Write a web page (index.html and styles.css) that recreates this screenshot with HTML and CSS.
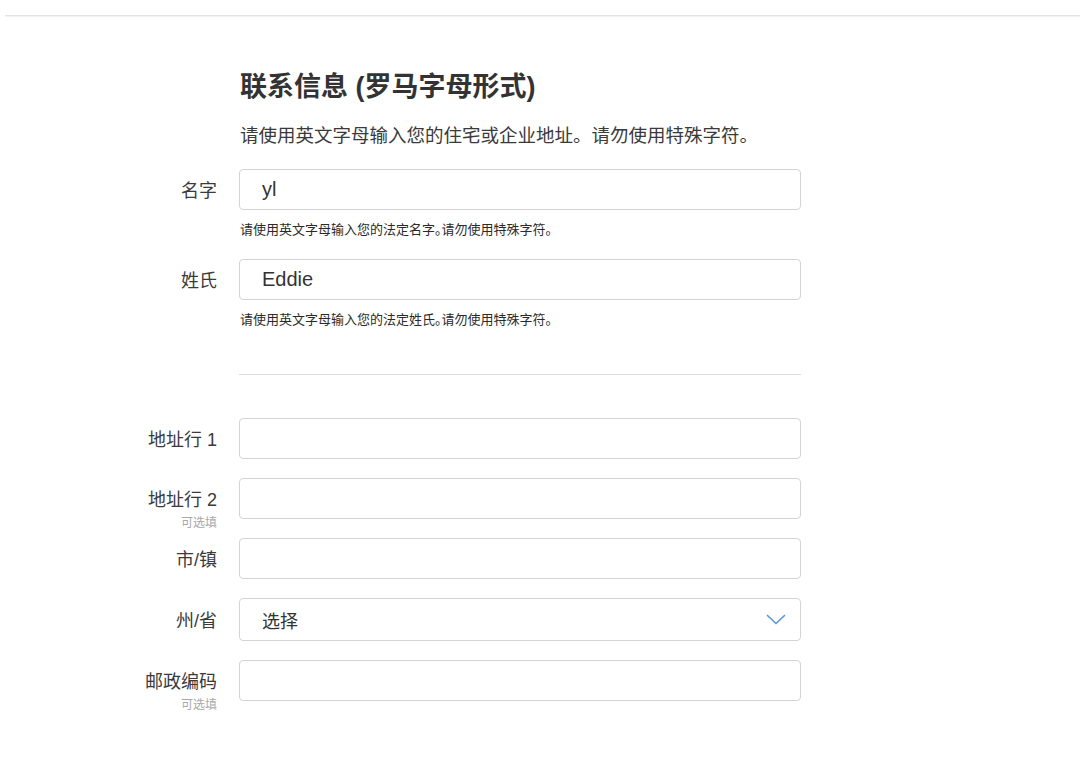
FILE: index.html
```html
<!DOCTYPE html>
<html lang="zh-CN">
<head>
<meta charset="utf-8">
<title>联系信息</title>
<link rel="stylesheet" href="styles.css">
</head>
<body>
<div class="topbar"></div>
<main class="form">
  <section class="intro">
    <div class="spacer"></div>
    <div class="intro-body">
      <h1 class="title">联系信息 (罗马字母形式)</h1>
      <p class="lead">请使用英文字母输入您的住宅或企业地址。请勿使用特殊字符。</p>
    </div>
  </section>

  <div class="field first">
    <label class="lbl"><span>名字</span></label>
    <div class="ctrl">
      <input class="input" type="text" value="yl">
      <p class="help">请使用英文字母输入您的法定名字<span class="half">。</span>请勿使用特殊字符。</p>
    </div>
  </div>

  <div class="field second">
    <label class="lbl"><span>姓氏</span></label>
    <div class="ctrl">
      <input class="input" type="text" value="Eddie">
      <p class="help">请使用英文字母输入您的法定姓氏<span class="half">。</span>请勿使用特殊字符。</p>
    </div>
  </div>

  <div class="field divider-row">
    <div class="spacer"></div>
    <hr class="divider">
  </div>

  <div class="field addr1">
    <label class="lbl"><span>地址行 1</span></label>
    <div class="ctrl"><input class="input" type="text"></div>
  </div>

  <div class="field next">
    <label class="lbl"><span>地址行 2</span><span class="sub">可选填</span></label>
    <div class="ctrl"><input class="input" type="text"></div>
  </div>

  <div class="field next">
    <label class="lbl"><span>市/镇</span></label>
    <div class="ctrl"><input class="input" type="text"></div>
  </div>

  <div class="field next tall">
    <label class="lbl"><span>州/省</span></label>
    <div class="ctrl">
      <div class="select">
        <span>选择</span>
        <svg class="chev" width="20" height="12" viewBox="0 0 20 12"><polyline points="1.5,1.5 10,9.5 18.5,1.5" fill="none" stroke="#5b9bd2" stroke-width="1.7" stroke-linecap="round" stroke-linejoin="round"/></svg>
      </div>
    </div>
  </div>

  <div class="field next">
    <label class="lbl"><span>邮政编码</span><span class="sub">可选填</span></label>
    <div class="ctrl"><input class="input" type="text"></div>
  </div>
</main>
</body>
</html>
```
FILE: styles.css
```css
html, body {
  margin: 0;
  padding: 0;
  background: #ffffff;
}
body {
  font-family: "Liberation Sans", "Noto Sans CJK SC", sans-serif;
  color: #333333;
}
.topbar {
  height: 15px;
  margin-left: 5px;
  border-bottom: 1px solid #e3e3e3;
  box-shadow: 0 1px 0 #f3f3f3;
}
.form {
  display: flex;
  flex-direction: column;
  padding-bottom: 60px;
}
.intro,
.field {
  display: grid;
  grid-template-columns: 217px 562px;
  column-gap: 22px;
  align-items: start;
}
.intro-body {
  padding-left: 1px;
}
.title {
  margin: 54px 0 0 0;
  font-size: 27px;
  line-height: 34px;
  font-weight: bold;
  color: #333333;
}
.lead {
  margin: 20px 0 0 0;
  font-size: 18.5px;
  line-height: 24px;
  color: #3a3a3a;
}
.field.first { margin-top: 21px; }
.field.second { margin-top: 21px; }
.field.divider-row { margin-top: 46px; }
.field.addr1 { margin-top: 43px; }
.field.next { margin-top: 19px; }

.lbl {
  height: 41px;
  display: flex;
  flex-direction: column;
  justify-content: center;
  align-items: flex-end;
  font-size: 18px;
  line-height: 22px;
  color: #3a3a3a;
  padding-top: 2px;
  box-sizing: border-box;
}
.tall .lbl { height: 43px; }
.lbl .sub {
  height: 0;
  font-size: 12px;
  line-height: 24px;
  color: #a8a8a8;
}
.ctrl {
  display: flex;
  flex-direction: column;
}
.input {
  box-sizing: border-box;
  width: 100%;
  height: 41px;
  margin: 0;
  border: 1px solid #d4d4d4;
  border-radius: 4px;
  padding: 0 22px;
  font-family: "Liberation Sans", "Noto Sans CJK SC", sans-serif;
  font-size: 20px;
  color: #333333;
  background: #ffffff;
  outline: none;
}
.help {
  margin: 12px 0 0 1px;
  font-size: 13px;
  line-height: 16px;
  color: #2a2a2a;
}
.help .half {
  font-feature-settings: "halt" 1;
}
.divider {
  margin: 0;
  border: 0;
  border-top: 1px solid #dcdcdc;
  height: 0;
}
.select {
  box-sizing: border-box;
  height: 43px;
  border: 1px solid #d4d4d4;
  border-radius: 4px;
  padding: 0 14px 0 22px;
  display: flex;
  align-items: center;
  justify-content: space-between;
  font-size: 18px;
  color: #333333;
}
.chev {
  display: block;
}
```
